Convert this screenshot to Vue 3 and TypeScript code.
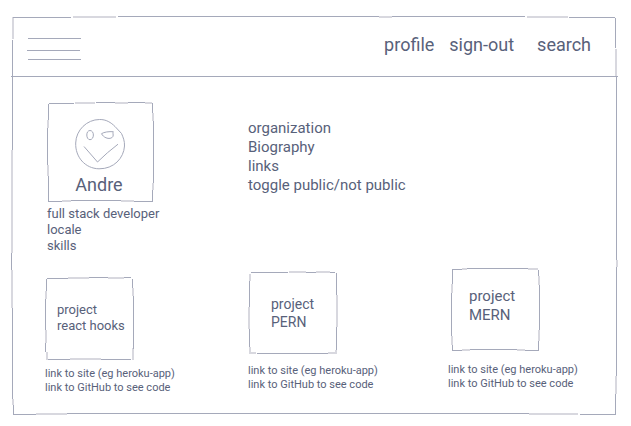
<script setup lang="ts">
interface Sketch {
  width: number
  height: number
  dark: string
  light: string
}

interface Project {
  id: string
  name: string
  size: string
  sketch: Sketch
}

const frame: Sketch = {
  width: 607,
  height: 399,
  dark: 'M2 1.5H60M107 .5H368M381 .5H514M558 1.5H604M604.5 2V32M605.5 61V244M605.5 251V360M604.5 378V398M605 398.5H569M518 397.5H56M25 398.5H2M1.5 24V134M.5 237V254M1.5 292V383M2.5 389V398',
  light: 'M62 1H105M368 1H381M516 1H557M605 33V60M606 244V251M605 360V378M518 398H567M25 398H56M2 1V23M1 134V237M1 254V292M2 383V389',
}

const portrait: Sketch = {
  width: 107,
  height: 100,
  dark: 'M2 1.5H27M49 .5H68M81 .5H98M105.5 1V11M106.5 19V81M105.5 88V100M87 99.5H106M24 98.5H74M1 99.5H15M1.5 74V99M.5 26V63M1.5 2V18',
  light: 'M28 1H48M68 1H81M98 1H105M106 11V19M106 81V88M74 99H87M15 99H24M1 63V74M1 18V26',
}

const projects: Project[] = [
  {
    id: 'hooks',
    name: 'react hooks',
    size: 'small',
    sketch: {
      width: 89,
      height: 83,
      dark: 'M2 1.5H23M44 .5H63M79 .5H86M87.5 2V11M88.5 19V72M56 82.5H86M3 82.5H25M.5 66V75M.5 22V53M1.5 2V14',
      light: 'M23 1H44M63 1H79M88 11V19M88 71V83M25 82H56M2 75V83M1 53V66M1 14V22',
    },
  },
  {
    id: 'pern',
    name: 'PERN',
    size: 'medium',
    sketch: {
      width: 89,
      height: 83,
      dark: 'M3 1.5H40M58 1.5H68M82 1.5H87M88.5 2V24M88.5 56V79M9 82.5H80M1.5 58V76M1.5 10V36',
      light: 'M41 1H58M68 1H82M89 24V56M88 79V83M80 82H88M2 82H8M2 76V83M1 36V58M2 3V10',
    },
  },
  {
    id: 'mern',
    name: 'MERN',
    size: 'large',
    sketch: {
      width: 89,
      height: 83,
      dark: 'M1 1.5H11M16 .5H77M87.5 2V8M88.5 17V62M87.5 73V82M74 82.5H88M19 81.5H66M1 82.5H11M1.5 77V82M.5 25V68M1.5 2V16',
      light: 'M11 1H16M77 1H87M88 8V17M88 62V73M66 82H74M11 82H19M1 68V77M1 16V25',
    },
  },
]
</script>

<template>
  <div class="page">
    <div class="frame">
      <svg class="sketch" :viewBox="`0 0 ${frame.width} ${frame.height}`" preserveAspectRatio="none" aria-hidden="true">
        <path class="light" :d="frame.light" />
        <path class="dark" :d="frame.dark" />
      </svg>

      <header class="header">
        <button class="menu" type="button" aria-label="Menu">
          <svg width="54" height="22" viewBox="0 0 54 22" aria-hidden="true">
            <path class="dark" d="M1 .5H54M0 12.5H53M1 21.5H54" />
          </svg>
        </button>
        <nav class="nav">
          <a href="#profile">profile</a>
          <a href="#sign-out">sign-out</a>
          <a class="search" href="#search">search</a>
        </nav>
      </header>

      <main>
        <section class="columns intro">
          <div class="person">
            <div class="portrait">
              <svg class="sketch" :viewBox="`0 0 ${portrait.width} ${portrait.height}`" preserveAspectRatio="none" aria-hidden="true">
                <path class="light" :d="portrait.light" />
                <path class="dark" :d="portrait.dark" />
              </svg>
              <svg class="face" width="52" height="52" viewBox="0 0 52 52" aria-hidden="true">
                <path d="M25.5 1.5C32 1.3 37 4.5 41 8.5L47.5 15.5C49 19 50.8 23 50.5 28C49.8 40 40 51 25 50.8C11 50.5 1.2 39 1.7 25C2 12 13 1.5 25.5 1.5Z" />
                <path d="M16 12.5C18 12.5 19.4 14.5 19.4 17S18 21.7 16 21.7S12.8 19.5 12.8 17S14 12.5 16 12.5Z" />
                <path d="M27.5 15.7C30 14 35 13.4 39.3 13.7C38.4 15 39.6 16.5 39 18.3C38 20.7 34.5 20.9 32 19.8C30 19 28.5 17.5 27.5 15.7Z" />
                <path d="M10 28.5L23.5 44Q33 34.5 44 26.2" />
              </svg>
              <h1>Andre</h1>
            </div>
            <p>full stack developer</p>
            <p>locale</p>
            <p>skills</p>
          </div>
          <div class="details">
            <p>organization</p>
            <p>Biography</p>
            <p>links</p>
            <button type="button">toggle public/not public</button>
          </div>
        </section>

        <section class="columns projects">
          <article v-for="project in projects" :key="project.id" class="project" :class="project.size">
            <div class="card">
              <svg class="sketch" :viewBox="`0 0 ${project.sketch.width} ${project.sketch.height}`" preserveAspectRatio="none" aria-hidden="true">
                <path class="light" :d="project.sketch.light" />
                <path class="dark" :d="project.sketch.dark" />
              </svg>
              <h2>project<br />{{ project.name }}</h2>
            </div>
            <a href="#site">link to site (eg heroku-app)</a>
            <a href="#code">link to GitHub to see code</a>
          </article>
        </section>
      </main>
    </div>
  </div>
</template>

<style>
body {
  margin: 0;
  background: #fff;
}
</style>

<style scoped>
.page {
  box-sizing: border-box;
  padding: 16px 13px 11px 11px;
  color: #58617a;
  font-family: Roboto, "Liberation Sans", sans-serif;
}

.frame,
.portrait,
.card {
  position: relative;
}

.frame {
  padding-bottom: 20px;
}

.sketch {
  position: absolute;
  inset: 0;
  width: 100%;
  height: 100%;
  overflow: visible;
  pointer-events: none;
}

.dark,
.light {
  fill: none;
  shape-rendering: crispEdges;
}

.dark {
  stroke: #a5a9ba;
  stroke-width: 1;
}

.light {
  stroke: #d8d8df;
  stroke-width: 2;
}

h1,
h2,
p {
  margin: 0;
  font-weight: 400;
}

a {
  color: inherit;
  text-decoration: none;
}

button {
  padding: 0;
  border: 0;
  background: none;
  color: inherit;
  font: inherit;
  text-align: left;
  cursor: pointer;
}

.header {
  display: flex;
  align-items: center;
  justify-content: space-between;
  box-sizing: border-box;
  height: 61px;
  padding: 2px 27px 4px 16px;
  border-bottom: 1px solid #a5a9ba;
}

.menu {
  padding-top: 8px;
}

.menu svg {
  display: block;
}

.nav {
  display: flex;
  gap: 15px;
  font-size: 18px;
  line-height: 20px;
}

.search {
  margin-left: 8px;
}

.columns {
  display: grid;
  grid-template-columns: 203fr 200fr 170fr;
  align-items: start;
  padding-left: 34px;
}

.intro {
  padding-top: 25px;
  font-size: 13px;
  line-height: 16px;
}

.person {
  padding-left: 2px;
}

.portrait {
  display: flex;
  flex-direction: column;
  align-items: center;
  box-sizing: border-box;
  width: 107px;
  margin-bottom: 4px;
  padding: 16px 1px 6px 0;
}

.face {
  fill: none;
  stroke: #a5a9ba;
  stroke-width: 1;
}

h1 {
  padding: 4px 2px 0 0;
  font-size: 18px;
  line-height: 22px;
}

.details {
  grid-column: 2 / 4;
  padding-top: 17px;
  font-size: 15px;
  line-height: 19px;
}

.details button {
  display: block;
}

.projects {
  padding-top: 14px;
}

.project {
  display: flex;
  flex-direction: column;
  font-size: 11px;
  line-height: 14px;
}

.card {
  display: flex;
  box-sizing: border-box;
  width: 89px;
  height: 83px;
  margin-bottom: 7px;
}

h2 {
  white-space: nowrap;
}

.small {
  padding-top: 9px;
}

.small h2 {
  padding: 25px 0 0 12px;
  font-size: 13px;
  line-height: 16px;
}

.medium {
  padding-top: 3px;
}

.medium .card {
  margin-bottom: 10px;
}

.medium h2 {
  padding: 24px 0 0 23px;
  font-size: 14px;
  line-height: 18px;
}

.large .card {
  margin-left: 3px;
  margin-bottom: 12px;
}

.large h2 {
  padding: 19px 0 0 18px;
  font-size: 15px;
  line-height: 19px;
}
</style>
